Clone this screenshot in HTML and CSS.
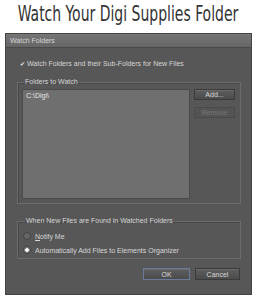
FILE: index.html
```html
<!DOCTYPE html>
<html lang="en">
  <head>
    <meta charset="UTF-8" />
    <title>Watch Folders</title>
    <link rel="stylesheet" href="styles.css">
  </head>
  <body>
    <h1 class="heading"><span>Watch Your Digi Supplies Folder</span></h1>
    <div class="dialog">
      <div class="titlebar">Watch Folders</div>
      <div class="content">
        <label class="check"><span class="tick">&#10004;</span> Watch Folders and their Sub-Folders for New Files</label>
        <fieldset class="group folders">
          <legend>Folders to Watch</legend>
          <div class="list">C:\Digi\</div>
          <div class="side">
            <button class="btn">Add...</button>
            <button class="btn disabled">Remove</button>
          </div>
        </fieldset>
        <fieldset class="group found">
          <legend>When New Files are Found in Watched Folders</legend>
          <label class="radio"><span class="dot"></span><span><u>N</u>otify Me</span></label>
          <label class="radio"><span class="dot on"></span><span>Automatically Add Files to Elements Organizer</span></label>
        </fieldset>
        <div class="actions">
          <button class="btn ok">OK</button>
          <button class="btn cancel">Cancel</button>
        </div>
      </div>
    </div>
  </body>
</html>
```

FILE: styles.css
```css
body {
  margin: 0;
  background: #fff;
  width: 257px;
  height: 300px;
  overflow: hidden;
}
.heading {
  margin: 0;
  height: 33px;
  line-height: 28px;
  text-align: center;
  font-family: "DejaVu Sans Condensed", "DejaVu Sans", sans-serif;
  font-weight: normal;
  font-size: 21px;
  color: #333;
  white-space: nowrap;
}
.heading span {
  display: inline-block;
  transform: scaleX(0.74);
  margin: 0 -60px;
}
.dialog {
  margin-left: 5px;
  width: 245px;
  height: 260px;
  background: #575757;
  border: 1px solid #444;
  font-family: "Liberation Sans", Arial, sans-serif;
  font-size: 7px;
  color: #d6d6d6;
}
.titlebar {
  height: 13px;
  line-height: 13px;
  padding-left: 4px;
  background: linear-gradient(#767676, #666);
  border-bottom: 1px solid #4a4a4a;
}
.content {
  padding: 10px 10px 0 11px;
}
.check {
  display: block;
  padding-left: 3px;
  height: 12px;
  line-height: 12px;
}
.tick {
  font-size: 6px;
  color: #e8e8e8;
}
.group {
  margin: 0;
  border: 1px solid #6c6c6c;
  box-shadow: inset 1px 1px 0 #474747;
}
.group legend {
  padding: 0 1px;
  margin-left: 2px;
  line-height: 8px;
}
.folders {
  margin-top: 8px;
  height: 126px;
  padding: 3px 5px 6px 4px;
  display: flex;
  gap: 4px;
  box-sizing: border-box;
}
.list {
  width: 168px;
  height: 110px;
  box-sizing: border-box;
  background: #6f6f6f;
  border: 1px solid #4a4a4a;
  padding: 2px 3px;
  color: #e4e4e4;
}
.side {
  display: flex;
  flex-direction: column;
  gap: 7px;
}
.btn {
  width: 41px;
  height: 11px;
  padding: 0;
  font-family: "Liberation Sans", Arial, sans-serif;
  font-size: 7px;
  color: #d8d8d8;
  background: linear-gradient(#5e5e5e, #4c4c4c);
  border: 1px solid #3a3a3a;
  box-shadow: inset 0 1px 0 #6a6a6a;
}
.btn.disabled {
  color: #777;
  background: #545454;
  box-shadow: none;
  border-color: #4a4a4a;
}
.found {
  margin-top: 13px;
  height: 42px;
  box-sizing: border-box;
  padding: 4px 0 0 5px;
}
.radio {
  display: flex;
  align-items: center;
  gap: 4px;
  height: 14px;
}
.dot {
  width: 6px;
  height: 6px;
  border-radius: 50%;
  border: 1px solid #444;
  background: #666;
}
.dot.on {
  background: radial-gradient(#fff 35%, #888 45%);
}
.actions {
  display: flex;
  justify-content: flex-end;
  gap: 5px;
  margin-top: 9px;
  padding-right: 1px;
}
.btn.ok {
  width: 47px;
  height: 12px;
  border-color: #6a7a99;
}
.btn.cancel {
  width: 45px;
  height: 12px;
}
```
